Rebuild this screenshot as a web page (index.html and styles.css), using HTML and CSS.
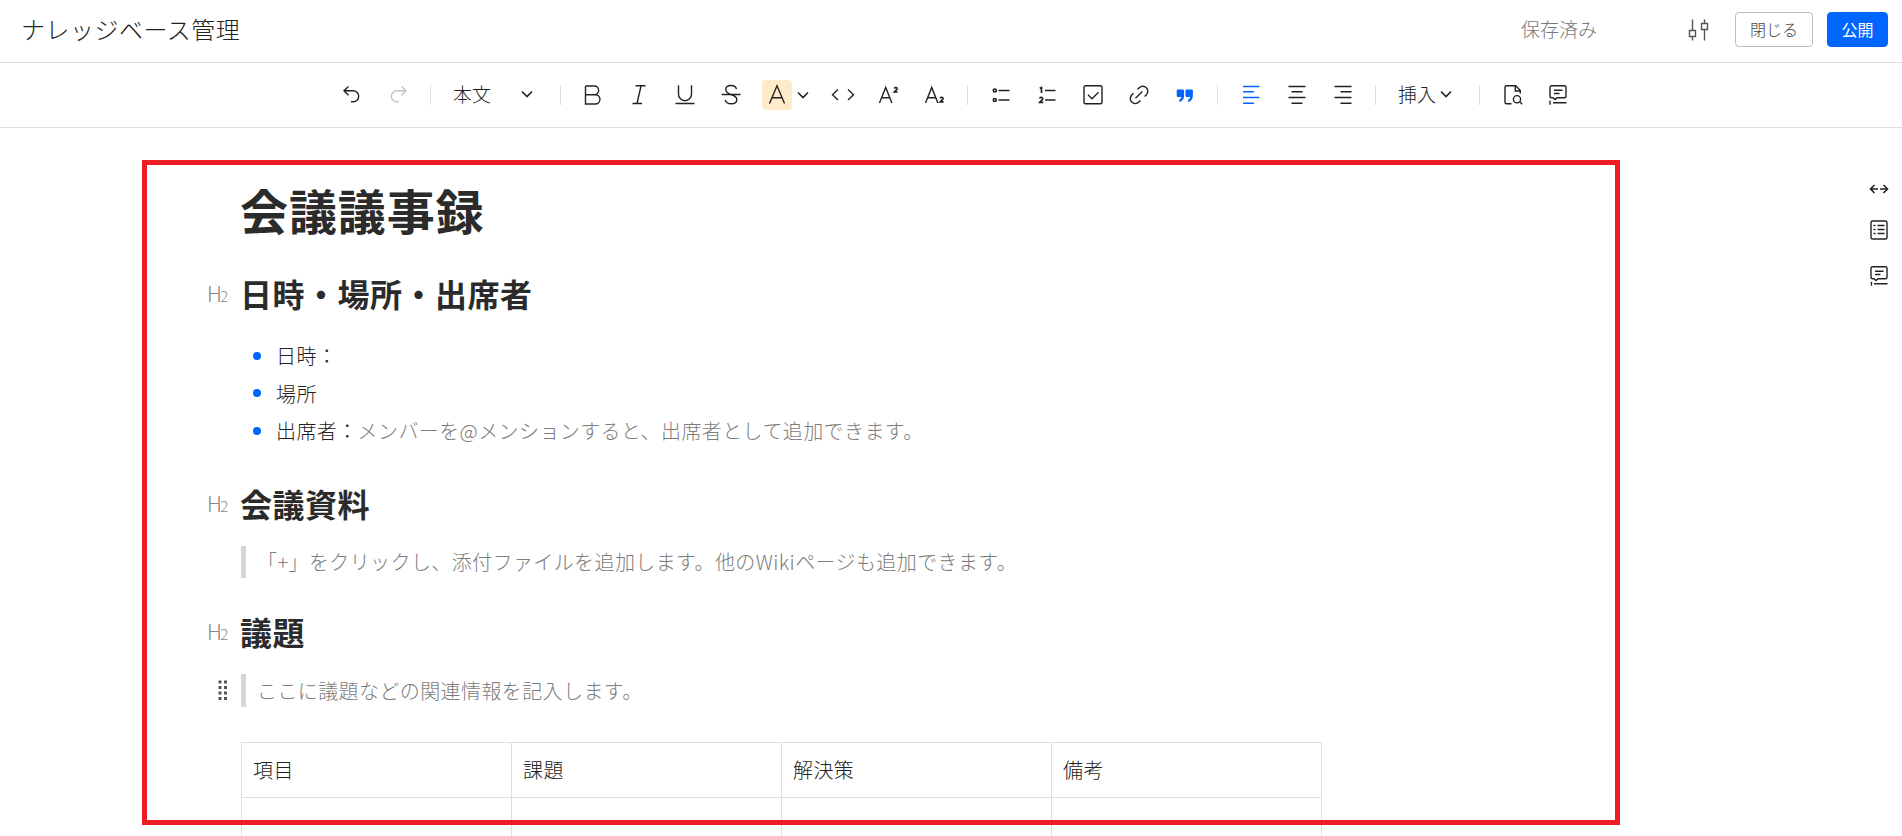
FILE: index.html
```html
<!DOCTYPE html>
<html lang="ja">
<head>
<meta charset="utf-8">
<title>ナレッジベース管理</title>
<link rel="stylesheet" href="styles.css">
</head>
<body>
<header class="header">
  <div class="title">ナレッジベース管理</div>
  <div class="saved">保存済み</div>
  <svg class="icon settings" viewBox="0 0 24 24"><path d="M5.5 1.5v11M5.5 18.500v4M2.500 12.500h6v6h-6zM17.500 1.500v4M17.500 11.500v11M14.500 5.500h6v6h-6z"/></svg>
  <button class="btn close">閉じる</button>
  <button class="btn publish">公開</button>
</header>

<nav class="toolbar">
  <span class="tool"><svg class="icon" viewBox="0 0 24 24"><path d="M8.500 3.500 4 7.800l4.500 4.500M4.500 7.800h8.700a5.500 5.500 0 0 1 0 11h-2.200"/></svg></span>
  <span class="tool off"><svg class="icon" viewBox="0 0 24 24"><path d="M15.500 3.500 20 7.800l-4.500 4.500M19.500 7.800h-8.700a5.500 5.500 0 0 0 0 11h2.200"/></svg></span>
  <i class="sep"></i>
  <span class="select">本文<svg class="icon chev" viewBox="0 0 12 12"><path d="m1 3.500 5 5 5-5"/></svg></span>
  <i class="sep"></i>
  <span class="tool"><svg class="icon" viewBox="0 0 24 24"><path d="M4.500 3v18h9.800a4.600 4.600 0 0 0 0-9.300H4.500M4.500 3h8.800a4.350 4.350 0 0 1 0 8.700"/></svg></span>
  <span class="tool"><svg class="icon" viewBox="0 0 24 24"><path d="M8.500 2.800h10M5.500 20.500h9.500M14 3l-4 17.500"/></svg></span>
  <span class="tool"><svg class="icon" viewBox="0 0 24 24"><path d="M5.500 2.200v9a6.500 6.500 0 0 0 13 0v-9M2.500 20.500h19"/></svg></span>
  <span class="tool"><svg class="icon" viewBox="0 0 24 24"><path d="M17.500 6c-.6-2.200-2.800-3.500-5.500-3.500-3 0-5.200 1.500-5.200 4 0 3 2.700 4.100 5.200 5 3.200 1 5.800 2 5.800 4.900 0 2.700-2.500 4.300-5.600 4.300-3 0-5.400-1.400-6-3.900M2.500 11.500h19"/></svg></span>
  <span class="tool color"><svg class="icon" viewBox="0 0 24 24"><path d="M4.500 20.500 12 2.800l7.500 17.700M6.900 14.800h10.200"/></svg></span>
  <svg class="icon chev color-chev" viewBox="0 0 12 12"><path d="m1 3.500 5 5 5-5"/></svg>
  <span class="tool"><svg class="icon" viewBox="0 0 24 24"><path d="M7 6.500 1.500 11.700 7 17M17 6.500l5.500 5.200L17 17"/></svg></span>
  <span class="tool"><svg class="icon" viewBox="0 0 24 24"><path d="m2.500 20 6.200-15.500L14.900 20M4.700 14.700h8"/><path class="bold" d="M17.300 5.500c.2-1.300 3-1.200 2.800.4-.2 1-1.800 2-2.800 3.100h3.300"/></svg></span>
  <span class="tool"><svg class="icon" viewBox="0 0 24 24"><path d="m2.500 20 6.200-15.500L14.900 20M4.700 14.700h8"/><path class="bold" d="M17.300 15.300c.2-1.300 3-1.200 2.800.4-.2 1-1.800 2-2.800 3.100h3.300"/></svg></span>
  <i class="sep"></i>
  <span class="tool list"><svg class="icon" viewBox="0 0 24 24"><path d="M9.500 7.500h11M9.500 17h11"/><circle class="bold" cx="5.800" cy="7.500" r="1.500"/><circle class="bold" cx="5.800" cy="17" r="1.500"/></svg></span>
  <span class="tool"><svg class="icon" viewBox="0 0 24 24"><path d="M10 7.500h10.500M10 17h10.500"/><path class="bold" d="M4.700 5.300 6.500 4.500V10M4.700 15.500c.2-1.700 3.200-1.400 3 .3-.2 1.200-2 2.100-3 3.500h3.600"/></svg></span>
  <span class="tool"><svg class="icon" viewBox="0 0 24 24"><rect x="3" y="2.800" width="18" height="18" rx="1.500"/><path d="m7 11.800 4 4 6.500-6.600"/></svg></span>
  <span class="tool"><svg class="icon" viewBox="0 0 24 24"><path d="m8.500 15.200 6.800-6.800M10.500 6.500l1.700-1.700a5 5 0 0 1 7.100 0 5 5 0 0 1 0 7.100l-1.700 1.700M6.500 10.300 4.800 12a5 5 0 0 0 0 7.100 5 5 0 0 0 7.100 0l1.600-1.700"/></svg></span>
  <span class="tool"><svg class="icon quote-icon" viewBox="0 0 24 24"><path d="M5 6.500h4.800a1.300 1.300 0 0 1 1.300 1.300v4.700c0 3.500-1.700 5.700-4.800 6.500v-2.200c1.300-.6 1.900-1.500 2-2.800H5a1.300 1.300 0 0 1-1.300-1.300V7.800A1.300 1.300 0 0 1 5 6.500ZM13.800 6.500h4.800a1.300 1.300 0 0 1 1.300 1.300v4.700c0 3.500-1.700 5.700-4.800 6.500v-2.200c1.300-.6 1.900-1.500 2-2.800h-3.300a1.300 1.300 0 0 1-1.300-1.300V7.800a1.300 1.300 0 0 1 1.300-1.300Z"/></svg></span>
  <i class="sep"></i>
  <span class="tool list on"><svg class="icon" viewBox="0 0 24 24"><path d="M4 3.500h16.500M4 8.700h11M4 14.500h16.500M4 20.200h11"/></svg></span>
  <span class="tool"><svg class="icon" viewBox="0 0 24 24"><path d="M3.500 3.500h17M6.500 8.700h11M3.500 14.500h17M6.500 20.200h11"/></svg></span>
  <span class="tool"><svg class="icon" viewBox="0 0 24 24"><path d="M3.500 3.500h17M9.500 8.700h11M3.500 14.500h17M9.500 20.200h11"/></svg></span>
  <i class="sep"></i>
  <span class="select insert">挿入<svg class="icon chev" viewBox="0 0 12 12"><path d="m1 3.500 5 5 5-5"/></svg></span>
  <i class="sep"></i>
  <span class="tool list"><svg class="icon" viewBox="0 0 24 24"><path d="M10.500 20.800H5.500a1.500 1.500 0 0 1-1.500-1.500v-15a1.500 1.500 0 0 1 1.500-1.500h9.300L19.300 7.500v3M14.300 3v5h5M19 19l2.200 2.200"/><circle cx="16" cy="16.200" r="3.600"/></svg></span>
  <span class="tool comment"><svg class="icon" viewBox="0 0 24 24"><path d="M5.500 2.800h13A1.500 1.500 0 0 1 20 4.300v9a1.500 1.500 0 0 1-1.500 1.500H11L9 16.500l-2-1.700H5.500A1.500 1.500 0 0 1 4 13.300v-9a1.500 1.500 0 0 1 1.500-1.500ZM8 7.300h8.500M8 10.500h5.500M4 17.700v4M7 19.800h13.500"/></svg></span>
</nav>

<main class="page">
  <article class="doc">
    <h1>会議議事録</h1>
    <section class="block first">
      <div class="heading"><span class="level">H<small>2</small></span><h2>日時・場所・出席者</h2></div>
      <ul class="items">
        <li>日時：</li>
        <li>場所</li>
        <li>出席者：<span class="hint">メンバーを@メンションすると、出席者として追加できます。</span></li>
      </ul>
    </section>
    <section class="block">
      <div class="heading"><span class="level">H<small>2</small></span><h2>会議資料</h2></div>
      <blockquote>「+」をクリックし、添付ファイルを追加します。他のWikiページも追加できます。</blockquote>
    </section>
    <section class="block last">
      <div class="heading"><span class="level">H<small>2</small></span><h2>議題</h2></div>
      <div class="row">
        <svg class="handle" viewBox="0 0 10 20"><path d="M.5.500h3v3h-3zM6 .500h3v3H6zM.500 6h3v3h-3zM6 6h3v3H6zM.500 11.500h3v3h-3zM6 11.500h3v3H6zM.500 17h3v3h-3zM6 17h3v3H6z"/></svg>
        <blockquote>ここに議題などの関連情報を記入します。</blockquote>
      </div>
    </section>
    <table class="grid">
      <tr><td>項目</td><td>課題</td><td>解決策</td><td>備考</td></tr>
      <tr><td></td><td></td><td></td><td></td></tr>
    </table>
  </article>
  <aside class="side">
    <svg class="icon" viewBox="0 0 24 24"><path class="mid" d="M7.500 8 3.500 12l4 4M4 12h7M16.500 8l4 4-4 4M20 12h-7"/></svg>
    <svg class="icon" viewBox="0 0 24 24"><rect x="4" y="3" width="16" height="18" rx="1.500"/><path d="M6.500 7.500h2M10.500 7.500h7M6.500 11.500h2M10.500 11.500h7M6.500 15.500h2M10.500 15.500h7"/></svg>
    <svg class="icon" viewBox="0 0 24 24"><path d="M5.500 2.800h13A1.500 1.500 0 0 1 20 4.300v9a1.500 1.500 0 0 1-1.500 1.500H11L9 16.500l-2-1.700H5.500A1.500 1.500 0 0 1 4 13.300v-9a1.500 1.500 0 0 1 1.500-1.500ZM8 7.300h8.500M8 10.500h5.500M4.500 17.700v4M7 19.800h13.500"/></svg>
  </aside>
</main>
<div class="frame"></div>
</body>
</html>
```
FILE: styles.css
```css
* { box-sizing: border-box; }
body {
  margin: 0;
  height: 836px;
  overflow: hidden;
  position: relative;
  background: #fff;
  color: #222;
  font-family: "Noto Sans CJK JP", sans-serif;
  font-weight: 300;
}
.header {
  display: flex;
  align-items: center;
  height: 63px;
  padding: 0 14px 3px 21px;
  border-bottom: 1px solid #dcdee0;
}
.title { flex: 1; padding-bottom: 2px; font-size: 24px; line-height: 36px; letter-spacing: .5px; }
.saved { width: 166px; padding-bottom: 2px; font-size: 19px; color: #777; line-height: 28px; }
.icon {
  display: block;
  flex: none;
  width: 24px;
  height: 24px;
  fill: none;
  stroke: currentColor;
  stroke-width: 1.4;
}
.icon .bold { stroke-width: 1.700; }
.icon .mid { stroke-width: 1.600; }
.settings { color: #555; margin-right: 24px; }
.btn {
  height: 35px;
  padding: 0 0 2px;
  border: 1px solid #bbb;
  border-radius: 4px;
  background: #fff;
  color: #444;
  font: 300 16px/30px "Noto Sans CJK JP", sans-serif;
}
.close { width: 78px; margin-right: 14px; }
.publish { width: 61px; background: #0066ff; border-color: #0066ff; color: #fff; font-weight: 400; }

.toolbar {
  display: flex;
  align-items: center;
  height: 65px;
  padding-left: 329px;
  border-bottom: 1px solid #dcdee0;
}
.tool { display: flex; justify-content: center; align-items: center; flex: none; width: 46px; height: 30px; }
.off { color: #c4c4c4; }
.on { color: #0066ff; }
.sep { flex: none; width: 1px; height: 20px; margin-left: 9px; background: #dcdee0; }
.list { margin-left: 10px; }
.select { display: flex; align-items: center; width: 98px; margin: 0 0 0 22px; padding-bottom: 2px; font-size: 19px; line-height: 28px; white-space: nowrap; }
.select .chev { margin-left: 30px; }
.chev { width: 12px; height: 12px; stroke-width: 1.600; }
.select + .sep + .tool { margin-left: 9px; }
.insert { width: 72px; margin-left: 22px; }
.insert .chev { margin-left: 4px; }
.insert + .sep + .tool { margin-left: 10px; }
.comment { margin-left: -1px; }
.color { width: 30px; margin-left: 8px; border-radius: 4px; background: #fdebca; }
.color-chev { margin: 0 11px 0 5px; }
.quote-icon { fill: #0066ff; stroke: none; }

.page { display: flex; justify-content: space-between; }
.doc {
  width: 1281px;
  margin-left: 40px;
  padding: 45px 0 0 201px;
  font-size: 20px;
  letter-spacing: .4px;
}
h1 { margin: 0 0 0 -1px; color: #2b2b2b; font-size: 48px; line-height: 72px; letter-spacing: .9px; }
.first { margin-top: 24px; }
.heading { display: flex; align-items: center; height: 48px; margin-left: -34px; }
.level { width: 33px; padding-top: 3px; color: #888; font: 300 21px/30px "Noto Sans CJK JP", sans-serif; letter-spacing: -1.800px; }
.level small { font-size: 15px; }
h2 { margin: 0; color: #2b2b2b; font-size: 32px; line-height: 48px; letter-spacing: .5px; }
.items { list-style: none; margin: 20px 0 0; padding: 0; }
.items li { display: flex; align-items: center; height: 37.500px; white-space: nowrap; }
.items li::before { content: ""; flex: none; width: 8px; height: 8px; margin: 0 15px 0 12px; border-radius: 50%; background: #0066ff; }
.hint { color: #7c7c7c; }
.block + .block { margin-top: 29px; }
blockquote { flex: 1; margin: 0; padding-left: 11px; border-left: 5px solid #d4d6d9; color: #7c7c7c; line-height: 32px; white-space: nowrap; }
.block > blockquote { margin-top: 19px; }
.row { display: flex; align-items: center; height: 33px; margin: 19px 0 0 -23px; }
.row blockquote { line-height: 33px; }
.handle { flex: none; width: 10px; height: 20px; margin-right: 13px; fill: #555; }
.grid { width: 1081px; margin-top: 35px; border-collapse: collapse; table-layout: fixed; }
.grid td { height: 55px; padding: 0 11px; border: 1px solid #dcdee0; line-height: 30px; }
.side { display: flex; flex-direction: column; width: 35px; padding-top: 49px; }
.side .icon { margin-bottom: 17px; }
.side .icon:nth-child(2) { margin-bottom: 22px; }
.frame { position: absolute; left: 142px; top: 160px; width: 1478px; height: 665px; border: 5px solid #ee1c24; }
```
